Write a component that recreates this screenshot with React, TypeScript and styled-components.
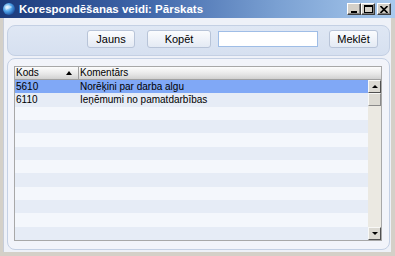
import React from "react";
import styled, { createGlobalStyle } from "styled-components";

const Global = createGlobalStyle`
  html, body { margin: 0; padding: 0; background: #d4d0c8; }
  body { font-family: Tahoma, "DejaVu Sans", "Liberation Sans", sans-serif; }
  * { box-sizing: border-box; }
`;

const Window = styled.div`
  width: 395px;
  height: 256px;
  display: flex;
  flex-direction: column;
  background: #d4d0c8;
  overflow: hidden;
`;

const TitleBar = styled.div`
  height: 18px;
  display: flex;
  align-items: center;
  padding: 0 4px 0 2px;
  background: linear-gradient(to right, #1b3a7a 0%, #3d64a8 35%, #7aa0d2 70%, #a9caee 100%);
`;

const TitleIcon = styled.svg`
  width: 14px;
  height: 14px;
  flex: none;
`;

const TitleText = styled.span`
  margin-left: 3px;
  color: #ffffff;
  font-family: "Liberation Sans", sans-serif;
  font-weight: bold;
  font-size: 11.5px;
  flex: 1;
  white-space: nowrap;
`;

const CaptionButtons = styled.div`
  display: flex;
`;

const CaptionButton = styled.div<{ $gap?: boolean }>`
  width: 14px;
  height: 12px;
  margin-left: ${(p) => (p.$gap ? "2px" : "0")};
  background: #d4d0c8;
  border: 1px solid;
  border-color: #ffffff #404040 #404040 #ffffff;
  box-shadow: inset -1px -1px 0 #808080;
  display: flex;
  align-items: center;
  justify-content: center;
`;

const Body = styled.div`
  flex: 1;
  margin: 0 4px 4px 3px;
  background: #eef1f8;
  display: flex;
  flex-direction: column;
  padding: 7px 1px 2px 3px;
  gap: 2px;
  border-left: 1px solid #c7cdd9;
`;

const ToolbarPanel = styled.div`
  height: 31px;
  border: 1px solid #c4d0e4;
  border-radius: 8px;
  background: linear-gradient(to bottom, #dfe7f4, #d6e0f0);
  display: flex;
  align-items: center;
  padding: 0 11px 3px 0;
  justify-content: flex-end;
`;

const Button = styled.div<{ $w: number; $ml: number }>`
  width: ${(p) => p.$w}px;
  margin-left: ${(p) => p.$ml}px;
  height: 18px;
  border: 1px solid #b8c4d8;
  border-radius: 3px;
  background: linear-gradient(to bottom, #fbfcfe, #e4eaf4);
  display: flex;
  align-items: center;
  justify-content: center;
  font-family: "Liberation Sans", sans-serif;
  font-size: 11px;
  color: #000;
`;

const SearchInput = styled.div`
  width: 100px;
  height: 16px;
  margin-left: 7px;
  border: 1px solid #9fbde6;
  background: #ffffff;
`;

const GridPanel = styled.div`
  flex: 1;
  border: 1px solid #c4d0e4;
  border-radius: 8px;
  background: #f2f4fa;
  padding: 7px 7px 8px 6px;
  display: flex;
`;

const Table = styled.div`
  flex: 1;
  border: 1px solid #a8a8a8;
  display: flex;
  flex-direction: column;
  background: #f4f7fc;
`;

const Header = styled.div`
  height: 13px;
  display: flex;
  background: linear-gradient(to bottom, #fdfdfd, #e6e6e6 60%, #d0d0d0);
  border-bottom: 1px solid #a0a0a0;
  font-family: "Liberation Sans", sans-serif;
  font-size: 10px;
  line-height: 12px;
`;

const HeaderCell = styled.div<{ $w?: number }>`
  ${(p) => (p.$w ? `width: ${p.$w}px;` : "flex: 1;")}
  padding-left: 1px;
  display: flex;
  align-items: center;
  border-right: 1px solid ${(p) => (p.$w ? "#a0a0a0" : "transparent")};
  color: #000;
  position: relative;
`;

const SortArrow = styled.span`
  position: absolute;
  right: 6px;
  top: 4px;
  width: 0;
  height: 0;
  border-left: 3px solid transparent;
  border-right: 3px solid transparent;
  border-bottom: 4px solid #000;
`;

const BodyArea = styled.div`
  flex: 1;
  display: flex;
`;

const Rows = styled.div`
  flex: 1;
  display: flex;
  flex-direction: column;
`;

const Row = styled.div<{ $variant: "sel" | "dark" | "light" }>`
  height: 13.333px;
  display: flex;
  align-items: center;
  font-family: "Liberation Sans", sans-serif;
  font-size: 10px;
  color: #000;
  background: ${(p) =>
    p.$variant === "sel" ? "#80a8f6" : p.$variant === "dark" ? "#e6ecf6" : "#f4f7fc"};
`;

const Cell = styled.div<{ $w?: number }>`
  ${(p) => (p.$w ? `width: ${p.$w}px;` : "flex: 1;")}
  padding-left: 1px;
  white-space: nowrap;
`;

const ScrollBar = styled.div`
  width: 13px;
  display: flex;
  flex-direction: column;
  background: #ebe9e2;
`;

const ScrollBtn = styled.div`
  height: 13px;
  background: #dcdad3;
  border: 1px solid;
  border-color: #f8f8f6 #505050 #505050 #f8f8f6;
  display: flex;
  align-items: center;
  justify-content: center;
`;

const Thumb = styled.div`
  height: 13px;
  background: #dcdad3;
  border: 1px solid;
  border-color: #f8f8f6 #8a8a8a #8a8a8a #f8f8f6;
`;

const Track = styled.div`
  flex: 1;
`;

const Tri = styled.span<{ $down?: boolean }>`
  width: 0;
  height: 0;
  border-left: 3px solid transparent;
  border-right: 3px solid transparent;
  ${(p) => (p.$down ? "border-top: 3px solid #000;" : "border-bottom: 3px solid #000;")}
`;

const data = [
  { k: "5610", c: "Norēķini par darba algu" },
  { k: "6110", c: "Ieņēmumi no pamatdarbības" },
];

export default function App() {
  const rows = Array.from({ length: 12 }, (_, i) => data[i] ?? { k: "", c: "" });
  return (
    <>
      <Global />
      <Window>
        <TitleBar>
          <TitleIcon viewBox="0 0 14 14">
            <defs>
              <radialGradient id="g" cx="0.35" cy="0.35" r="0.7">
                <stop offset="0" stopColor="#dff2ff" />
                <stop offset="0.5" stopColor="#4fa3e8" />
                <stop offset="1" stopColor="#1a4f9e" />
              </radialGradient>
            </defs>
            <circle cx="7" cy="7" r="6" fill="url(#g)" />
            <path d="M3 5 C5 3 8 3 10 5 C9 7 6 6 4 8 Z" fill="#ffffff" opacity="0.45" />
          </TitleIcon>
          <TitleText>Korespondēšanas veidi: Pārskats</TitleText>
          <CaptionButtons>
            <CaptionButton>
              <svg width="8" height="8" viewBox="0 0 8 8">
                <rect x="1" y="6" width="6" height="2" fill="#000" />
              </svg>
            </CaptionButton>
            <CaptionButton>
              <svg width="9" height="8" viewBox="0 0 9 8">
                <rect x="0.5" y="0.5" width="8" height="7" fill="none" stroke="#000" />
                <rect x="0" y="0" width="9" height="2" fill="#000" />
              </svg>
            </CaptionButton>
            <CaptionButton $gap>
              <svg width="8" height="7" viewBox="0 0 8 7">
                <path d="M0.5 0 L7.5 7 M7.5 0 L0.5 7" stroke="#000" strokeWidth="1.6" />
              </svg>
            </CaptionButton>
          </CaptionButtons>
        </TitleBar>
        <Body>
          <ToolbarPanel>
            <Button $w={48} $ml={0}>Jauns</Button>
            <Button $w={64} $ml={12}>Kopēt</Button>
            <SearchInput />
            <Button $w={49} $ml={11}>Meklēt</Button>
          </ToolbarPanel>
          <GridPanel>
            <Table>
              <Header>
                <HeaderCell $w={64}>
                  Kods
                  <SortArrow />
                </HeaderCell>
                <HeaderCell>Komentārs</HeaderCell>
              </Header>
              <BodyArea>
                <Rows>
                  {rows.map((r, i) => (
                    <Row key={i} $variant={i === 0 ? "sel" : i % 2 === 1 ? "dark" : "light"}>
                      <Cell $w={64}>{r.k}</Cell>
                      <Cell>{r.c}</Cell>
                    </Row>
                  ))}
                </Rows>
                <ScrollBar>
                  <ScrollBtn>
                    <Tri />
                  </ScrollBtn>
                  <Thumb />
                  <Track />
                  <ScrollBtn>
                    <Tri $down />
                  </ScrollBtn>
                </ScrollBar>
              </BodyArea>
            </Table>
          </GridPanel>
        </Body>
      </Window>
    </>
  );
}
